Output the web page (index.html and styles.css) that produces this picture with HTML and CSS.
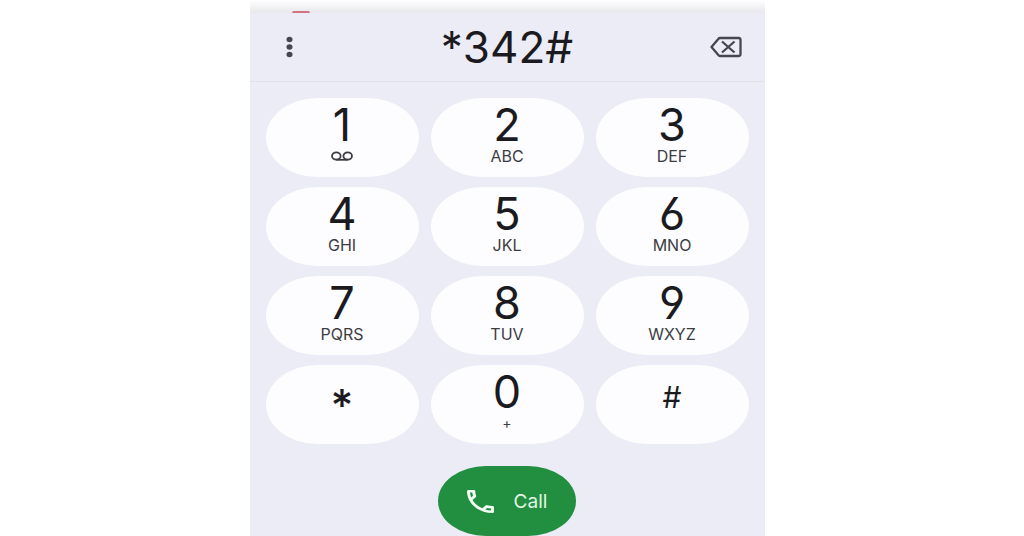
FILE: index.html
```html
<!DOCTYPE html>
<html lang="en">

<head>
    <meta charset="UTF-8">
    <meta name="viewport" content="width=device-width, initial-scale=1.0">
    <title>Phone</title>
    <link rel="stylesheet" href="styles.css">
</head>

<body>
    <main class="dialer">
        <div class="top-edge"><span class="record-dot"></span></div>
        <header class="number-bar">
            <button type="button" class="icon-button" aria-label="More options">
                <svg width="8" height="22" viewBox="0 0 8 22" fill="#45464f">
                    <ellipse cx="4.5" cy="3.5" rx="3" ry="2.7" />
                    <ellipse cx="4.5" cy="11" rx="3" ry="2.7" />
                    <ellipse cx="4.5" cy="18.5" rx="3" ry="2.7" />
                </svg>
            </button>
            <output class="number">*342#</output>
            <button type="button" class="icon-button" aria-label="Delete">
                <svg width="32" height="22" viewBox="0 0 32 22" fill="none" stroke="#45464f" stroke-width="2.3">
                    <path d="M10 2H28.5Q30.5 2 30.5 4V18Q30.5 20 28.5 20H10Q9 20 8.3 19L1.5 11L8.3 3Q9 2 10 2Z" stroke-linejoin="round" />
                    <path d="M12 5.500L24.500 16.500M24.500 5.500L12 16.500" />
                </svg>
            </button>
        </header>
        <section class="keypad">
            <button type="button" class="key" aria-label="1, voicemail">
                <span class="digit">1</span>
                <span class="letters">
                    <svg width="22" height="10" viewBox="0 0 22 10" fill="none" stroke="#3c3d42" stroke-width="1.8">
                        <ellipse cx="5.3" cy="5" rx="4.3" ry="3.7" />
                        <ellipse cx="16.7" cy="5" rx="4.3" ry="3.7" />
                        <path d="M5.3 8.8H16.7" />
                    </svg>
                </span>
            </button>
            <button type="button" class="key"><span class="digit">2</span><span class="letters">ABC</span></button>
            <button type="button" class="key"><span class="digit">3</span><span class="letters">DEF</span></button>
            <button type="button" class="key"><span class="digit">4</span><span class="letters">GHI</span></button>
            <button type="button" class="key"><span class="digit">5</span><span class="letters">JKL</span></button>
            <button type="button" class="key"><span class="digit">6</span><span class="letters">MNO</span></button>
            <button type="button" class="key"><span class="digit">7</span><span class="letters">PQRS</span></button>
            <button type="button" class="key"><span class="digit">8</span><span class="letters">TUV</span></button>
            <button type="button" class="key"><span class="digit">9</span><span class="letters">WXYZ</span></button>
            <button type="button" class="key star">*</button>
            <button type="button" class="key"><span class="digit">0</span><span class="letters plus">+</span></button>
            <button type="button" class="key hash">#</button>
        </section>
        <footer class="actions">
            <button type="button" class="call">
                <svg width="27" height="23" viewBox="3 3 18 18" preserveAspectRatio="none" fill="#f4fff4">
                    <path d="M6.54 5c.06.89.21 1.76.45 2.59l-1.2 1.2c-.41-1.2-.67-2.47-.76-3.79h1.51m9.86 12.02c.85.24 1.72.39 2.6.45v1.49c-1.32-.09-2.59-.35-3.8-.75l1.2-1.19M7.5 3H4c-.55 0-1 .45-1 1 0 9.39 7.61 17 17 17 .55 0 1-.45 1-1v-3.49c0-.55-.45-1-1-1-1.24 0-2.45-.2-3.57-.57-.1-.04-.21-.05-.31-.05-.26 0-.51.1-.71.29l-2.2 2.2c-2.83-1.45-5.15-3.76-6.59-6.59l2.2-2.2c.28-.28.36-.67.25-1.02C8.7 6.45 8.5 5.25 8.5 4c0-.55-.45-1-1-1z" />
                </svg>
                Call
            </button>
        </footer>
    </main>
</body>

</html>
```
FILE: styles.css
```css
* {
    padding: 0;
    margin: 0;
    box-sizing: border-box;
}

body {
    padding-right: 10px;
    background-color: #fff;
    font-family: Inter, "Liberation Sans", sans-serif;
    color: #1b1b1f;
}

button {
    border: none;
    background: none;
    font: inherit;
    color: inherit;
    cursor: pointer;
}

svg {
    display: block;
}

.dialer {
    width: 100%;
    max-width: 515px;
    min-height: 100vh;
    margin: 0 auto;
    background-color: #ebecf5;
}

.top-edge {
    height: 13px;
    padding-left: 42px;
    display: flex;
    align-items: flex-end;
    background: linear-gradient(#fff, #f7f6f8 35%, #e8e8ed);
}

.record-dot {
    width: 18px;
    height: 2px;
    border-radius: 9px 9px 0 0;
    background-color: #cf7480;
}

.number-bar {
    height: 69px;
    padding: 0 23px;
    display: grid;
    grid-template-columns: 32px 1fr 32px;
    align-items: center;
    border-bottom: 1px solid #e0e1e9;
}

.icon-button {
    display: flex;
    justify-content: center;
}

.number {
    font-size: 44px;
    line-height: 48px;
    text-align: center;
}

.keypad {
    padding: 16px 16px 0;
    display: grid;
    grid-template-columns: repeat(3, 1fr);
    gap: 10px 12px;
}

.key {
    height: 79px;
    padding-top: 4px;
    display: flex;
    flex-direction: column;
    align-items: center;
    border-radius: 52px / 40px;
    background-color: #fdfcff;
}

/* straight-stemmed 6 and 9 */
.digit {
    font-size: 45px;
    line-height: 46px;
    font-feature-settings: "cv03", "cv04";
}

.letters {
    height: 16px;
    display: flex;
    align-items: center;
    font-size: 16px;
    line-height: 16px;
    color: #3c3d42;
}

.plus {
    font-size: 14px;
}

.star {
    font-size: 44px;
    line-height: 72px;
    font-weight: 500;
}

.hash {
    font-size: 30px;
    line-height: 56px;
}

.actions {
    padding-top: 22px;
    display: flex;
    justify-content: center;
}

.call {
    width: 138px;
    height: 70px;
    display: flex;
    align-items: center;
    justify-content: center;
    gap: 20px;
    border-radius: 48px / 35px;
    background-color: #218e40;
    color: #e2f8e3;
    font-size: 19px;
}
```
